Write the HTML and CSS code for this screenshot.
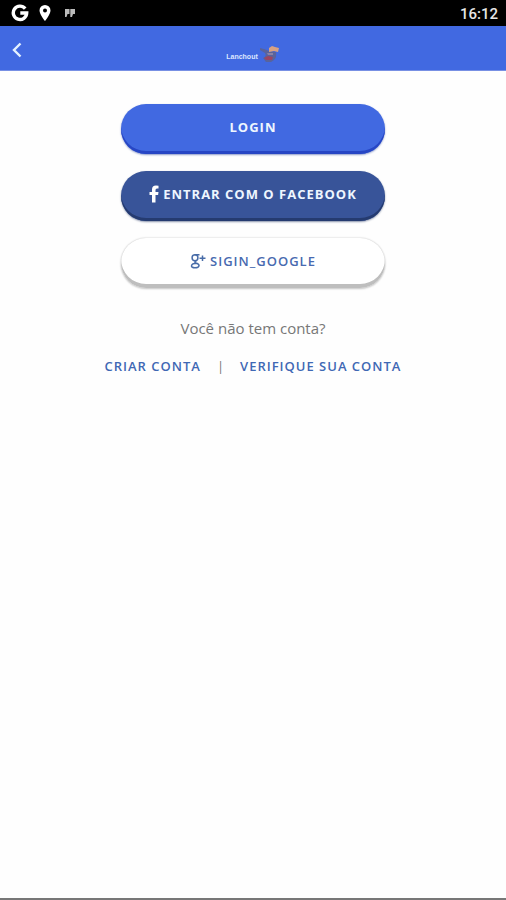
FILE: index.html
```html
<!DOCTYPE html>
<html lang="pt-BR">
<head>
<meta charset="utf-8">
<meta name="viewport" content="width=device-width, initial-scale=1">
<title>Login</title>
<link rel="stylesheet" href="styles.css">
</head>
<body>
<div class="status">
  <div class="status-icons">
    <svg width="18" height="18" viewBox="0 0 18 18" aria-hidden="true"><path d="M14.2 4.6A6.7 6.7 0 1 0 15.700 9H9.300" fill="none" stroke="#fff" stroke-width="3.400"/></svg>
    <svg width="12" height="18" viewBox="0 0 12 18" aria-hidden="true"><path fill="#fff" fill-rule="evenodd" d="M6 1a5.500 5.500 0 0 0-5.500 5.500C.5 10.500 6 17 6 17s5.500-6.500 5.500-10.500A5.500 5.500 0 0 0 6 1zm0 3.500a2 2 0 1 1 0 4 2 2 0 0 1 0-4z"/></svg>
    <svg class="quote" width="10" height="8" viewBox="0 0 10 8" aria-hidden="true"><path fill="#bbb" d="M0 0h4.500v5H2.500L1.500 8H0zM5.300 0H10v5H8L7 8H5.300z"/></svg>
  </div>
  <span class="clock">16:12</span>
</div>
<header class="bar">
  <button class="back" type="button" aria-label="Voltar">
    <svg width="10" height="16" viewBox="0 0 10 16" aria-hidden="true"><path d="M8.500 1.500L2 8l6.500 6.500" fill="none" stroke="#e4f2ff" stroke-width="2.400"/></svg>
  </button>
  <div class="brand">
    <span class="brand-name">Lanchout</span>
    <svg width="20" height="18" viewBox="0 0 20 18" aria-hidden="true">
      <path d="M0 3q5 1 9 3l7 1q1 5-2 8l-3 2H6l-3-4q4-2 2-5L0 5z" fill="#59639b"/>
      <path d="M9 3l3-2 3 1 4 1-1 4-4-1-5 1z" fill="#d8a183"/>
      <path d="M4 13l4-2 5 1-1 3H6z" fill="#9b4562"/>
      <path d="M7 8h6v2H8z" fill="#8a82a5"/>
    </svg>
  </div>
</header>
<main class="content">
  <div class="buttons">
    <button class="btn login" type="button">LOGIN</button>
    <button class="btn facebook" type="button"><svg width="10" height="18" viewBox="0 0 10 18" aria-hidden="true"><path fill="#fff" d="M9.500.7v2.800H8Q6.500 3.500 6.500 5v2h3l-.4 3H6.500v7.500H3V10H.5V7H3V4.600Q3 .5 7 .5z"/></svg>ENTRAR COM O FACEBOOK</button>
    <button class="btn google" type="button"><svg width="16" height="16" viewBox="0 0 16 16" aria-hidden="true"><g fill="none" stroke="#486ca8" stroke-width="1.500"><ellipse cx="5" cy="4.800" rx="2.900" ry="3"/><path d="M4.500 1.800H9.500M6.500 7.600Q3.500 9 6 10q3.500 1.200 3 2.800c-.6 2.600-8 2.600-7.500 0Q2 10.300 6.500 10.300M12.500 2.500v5.500M9.500 5.200h6"/></g></svg>SIGIN_GOOGLE</button>
  </div>
  <p class="question">Você não tem conta?</p>
  <nav class="links">
    <a href="#criar">CRIAR CONTA</a>
    <span class="divider">|</span>
    <a href="#verificar">VERIFIQUE SUA CONTA</a>
  </nav>
</main>
</body>
</html>
```
FILE: styles.css
```css
* {
  box-sizing: border-box;
}

body {
  margin: 0;
  min-height: 100vh;
  display: flex;
  flex-direction: column;
  background: #fefefe;
  border-bottom: 2px solid #777;
  font-family: "Open Sans", "Noto Sans", sans-serif;
}

.status {
  display: flex;
  align-items: center;
  justify-content: space-between;
  height: 26px;
  padding: 0 8px 0 11px;
  background: #000;
}

.status-icons {
  display: flex;
  align-items: center;
  gap: 10px;
}

.quote {
  margin-left: 4px;
}

.clock {
  padding-top: 2px;
  color: #e6e6e6;
  font: 500 15px/24px Roboto, sans-serif;
}

.bar {
  display: grid;
  grid-template-columns: 48px 1fr 48px;
  align-items: center;
  height: 45px;
  background: #4169e1;
  border-bottom: 1px solid #7890e4;
}

.back {
  display: flex;
  align-items: center;
  height: 44px;
  padding: 4px 0 0 12px;
  border: 0;
  background: none;
}

.brand {
  display: flex;
  align-items: center;
  justify-content: center;
  gap: 2px;
  padding-top: 12px;
}

.brand-name {
  padding-top: 6px;
  color: #dce6ff;
  font: bold 7px/8px "Liberation Sans", sans-serif;
}

.content {
  display: flex;
  flex-direction: column;
  align-items: center;
  padding: 33px 16px;
}

.buttons {
  display: flex;
  flex-direction: column;
  gap: 17px;
  width: 264px;
  max-width: 100%;
}

.btn {
  display: flex;
  align-items: center;
  justify-content: center;
  gap: 4px;
  height: 50px;
  padding: 0 0 4px;
  border: 0;
  border-radius: 25px;
  color: #eef6ff;
  font: bold 13px/18px "Open Sans", sans-serif;
  letter-spacing: 1px;
}

.login {
  background: #4169e1;
  box-shadow: inset 0 -3px 0 #2746c4, 0 1px 2px #8c9ac8;
}

.facebook {
  background: #385499;
  box-shadow: inset 0 -3px 0 #253b70, 0 1px 2px #8791aa;
}

.google {
  background: #fff;
  color: #486ab0;
  font-weight: 600;
  box-shadow: inset 0 -4px 0 #bebebe, 0 0 2px #c4c4c4, 0 1px 2px #ccc;
}

.question {
  margin: 29px 0 0;
  color: #777;
  font-size: 15px;
  line-height: 22px;
}

.links {
  display: flex;
  justify-content: center;
  gap: 16px;
  margin-top: 16px;
  font-size: 13px;
  line-height: 22px;
}

.links a {
  color: #3f68b4;
  font-weight: 600;
  letter-spacing: 1px;
  text-decoration: none;
}

.divider {
  color: #777;
}
```
